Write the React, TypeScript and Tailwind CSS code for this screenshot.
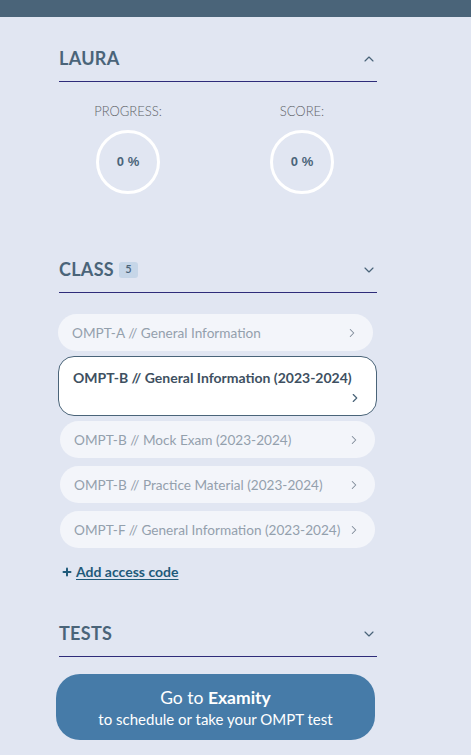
import React from "react";
import { ChevronDown, ChevronUp, ChevronRight, Plus } from "lucide-react";

const classes = [
  { label: "OMPT-A // General Information", active: false, gap: "mr-[4px]" },
  { label: "OMPT-B // General Information (2023-2024)", active: true, gap: "mt-[5px]" },
  { label: "OMPT-B // Mock Exam (2023-2024)", active: false, gap: "mx-[2px] mt-[5px]" },
  { label: "OMPT-B // Practice Material (2023-2024)", active: false, gap: "mx-[2px] mt-[8px]" },
  { label: "OMPT-F // General Information (2023-2024)", active: false, gap: "mx-[2px] mt-[8px]" },
];

function SectionHeader({ title, open, badge }: { title: string; open?: boolean; badge?: string }) {
  return (
    <div className="flex items-center justify-between border-b border-[#2e2c7a] pb-[11px]">
      <div className="flex items-center gap-[5px]">
        <span className="text-[18px] font-bold leading-[23px] tracking-[0.3px] text-[#4a6479]">{title}</span>
        {badge && (
          <span className="flex h-[16px] w-[19px] items-center justify-center rounded-[3px] bg-[#c6d6e8] text-[11px] font-semibold text-[#4a6479]">
            {badge}
          </span>
        )}
      </div>
      {open ? (
        <ChevronUp size={16} strokeWidth={1.75} className="text-[#4a6479]" />
      ) : (
        <ChevronDown size={16} strokeWidth={1.75} className="text-[#4a6479]" />
      )}
    </div>
  );
}

function Ring({ label }: { label: string }) {
  return (
    <div className="flex w-[80px] flex-col items-center">
      <span className="text-[13px] font-light leading-[16px] text-[#5f6368]">{label}</span>
      <div className="mt-[11px] flex h-[64px] w-[64px] items-center justify-center rounded-full border-[3px] border-white">
        <span className="font-['Liberation_Sans',sans-serif] text-[13px] font-bold text-[#4a6479]">0 %</span>
      </div>
    </div>
  );
}

export default function App() {
  return (
    <div className="min-h-[755px] w-full bg-[#e1e6f2] font-['Lato',sans-serif]">
      <div className="h-[17px] bg-[#4a6479]" />
      <div className="w-[377px] pl-[59px] pt-[30px]">
        <SectionHeader title="LAURA" open />
        <div className="mt-[21px] flex gap-[94px] pl-[29px]">
          <Ring label="PROGRESS:" />
          <Ring label="SCORE:" />
        </div>

        <div className="mt-[64px]">
          <SectionHeader title="CLASS" badge="5" />
        </div>

        <div className="-ml-[1px] mt-[21px] flex flex-col">
          {classes.map((c) =>
            c.active ? (
              <div
                key={c.label}
                className={`flex h-[60px] flex-col rounded-[16px] border border-[#4a6479] bg-white px-[14px] pt-[12px] ${c.gap}`}
              >
                <span className="text-[14px] font-bold leading-[18px] text-[#3e5061]">{c.label}</span>
                <ChevronRight size={14} strokeWidth={2} className="mt-[4px] self-end text-[#4a6479]" />
              </div>
            ) : (
              <div
                key={c.label}
                className={`flex h-[37px] items-center justify-between rounded-full bg-[#f3f5fa] px-[14px] ${c.gap}`}
              >
                <span className="text-[13.6px] leading-[18px] text-[#93a0ad]">{c.label}</span>
                <ChevronRight size={14} strokeWidth={1.75} className="text-[#7e8a98]" />
              </div>
            )
          )}
        </div>

        <a href="#" className="mt-[13px] flex items-center gap-[3px] pl-[2px] text-[14px] font-bold text-[#1f5a7a]">
          <Plus size={12} strokeWidth={4} />
          <span className="underline underline-offset-2">Add access code</span>
        </a>

        <div className="mt-[40px]">
          <SectionHeader title="TESTS" />
        </div>

        <button className="-ml-[3px] mt-[17px] flex h-[66px] w-[319px] flex-col items-center justify-center rounded-[24px] bg-[#467ba8] text-white">
          <span className="text-[17.5px] leading-[23px]">
            Go to <span className="font-bold">Examity</span>
          </span>
          <span className="text-[15px] leading-[20px]">to schedule or take your OMPT test</span>
        </button>
      </div>
    </div>
  );
}
